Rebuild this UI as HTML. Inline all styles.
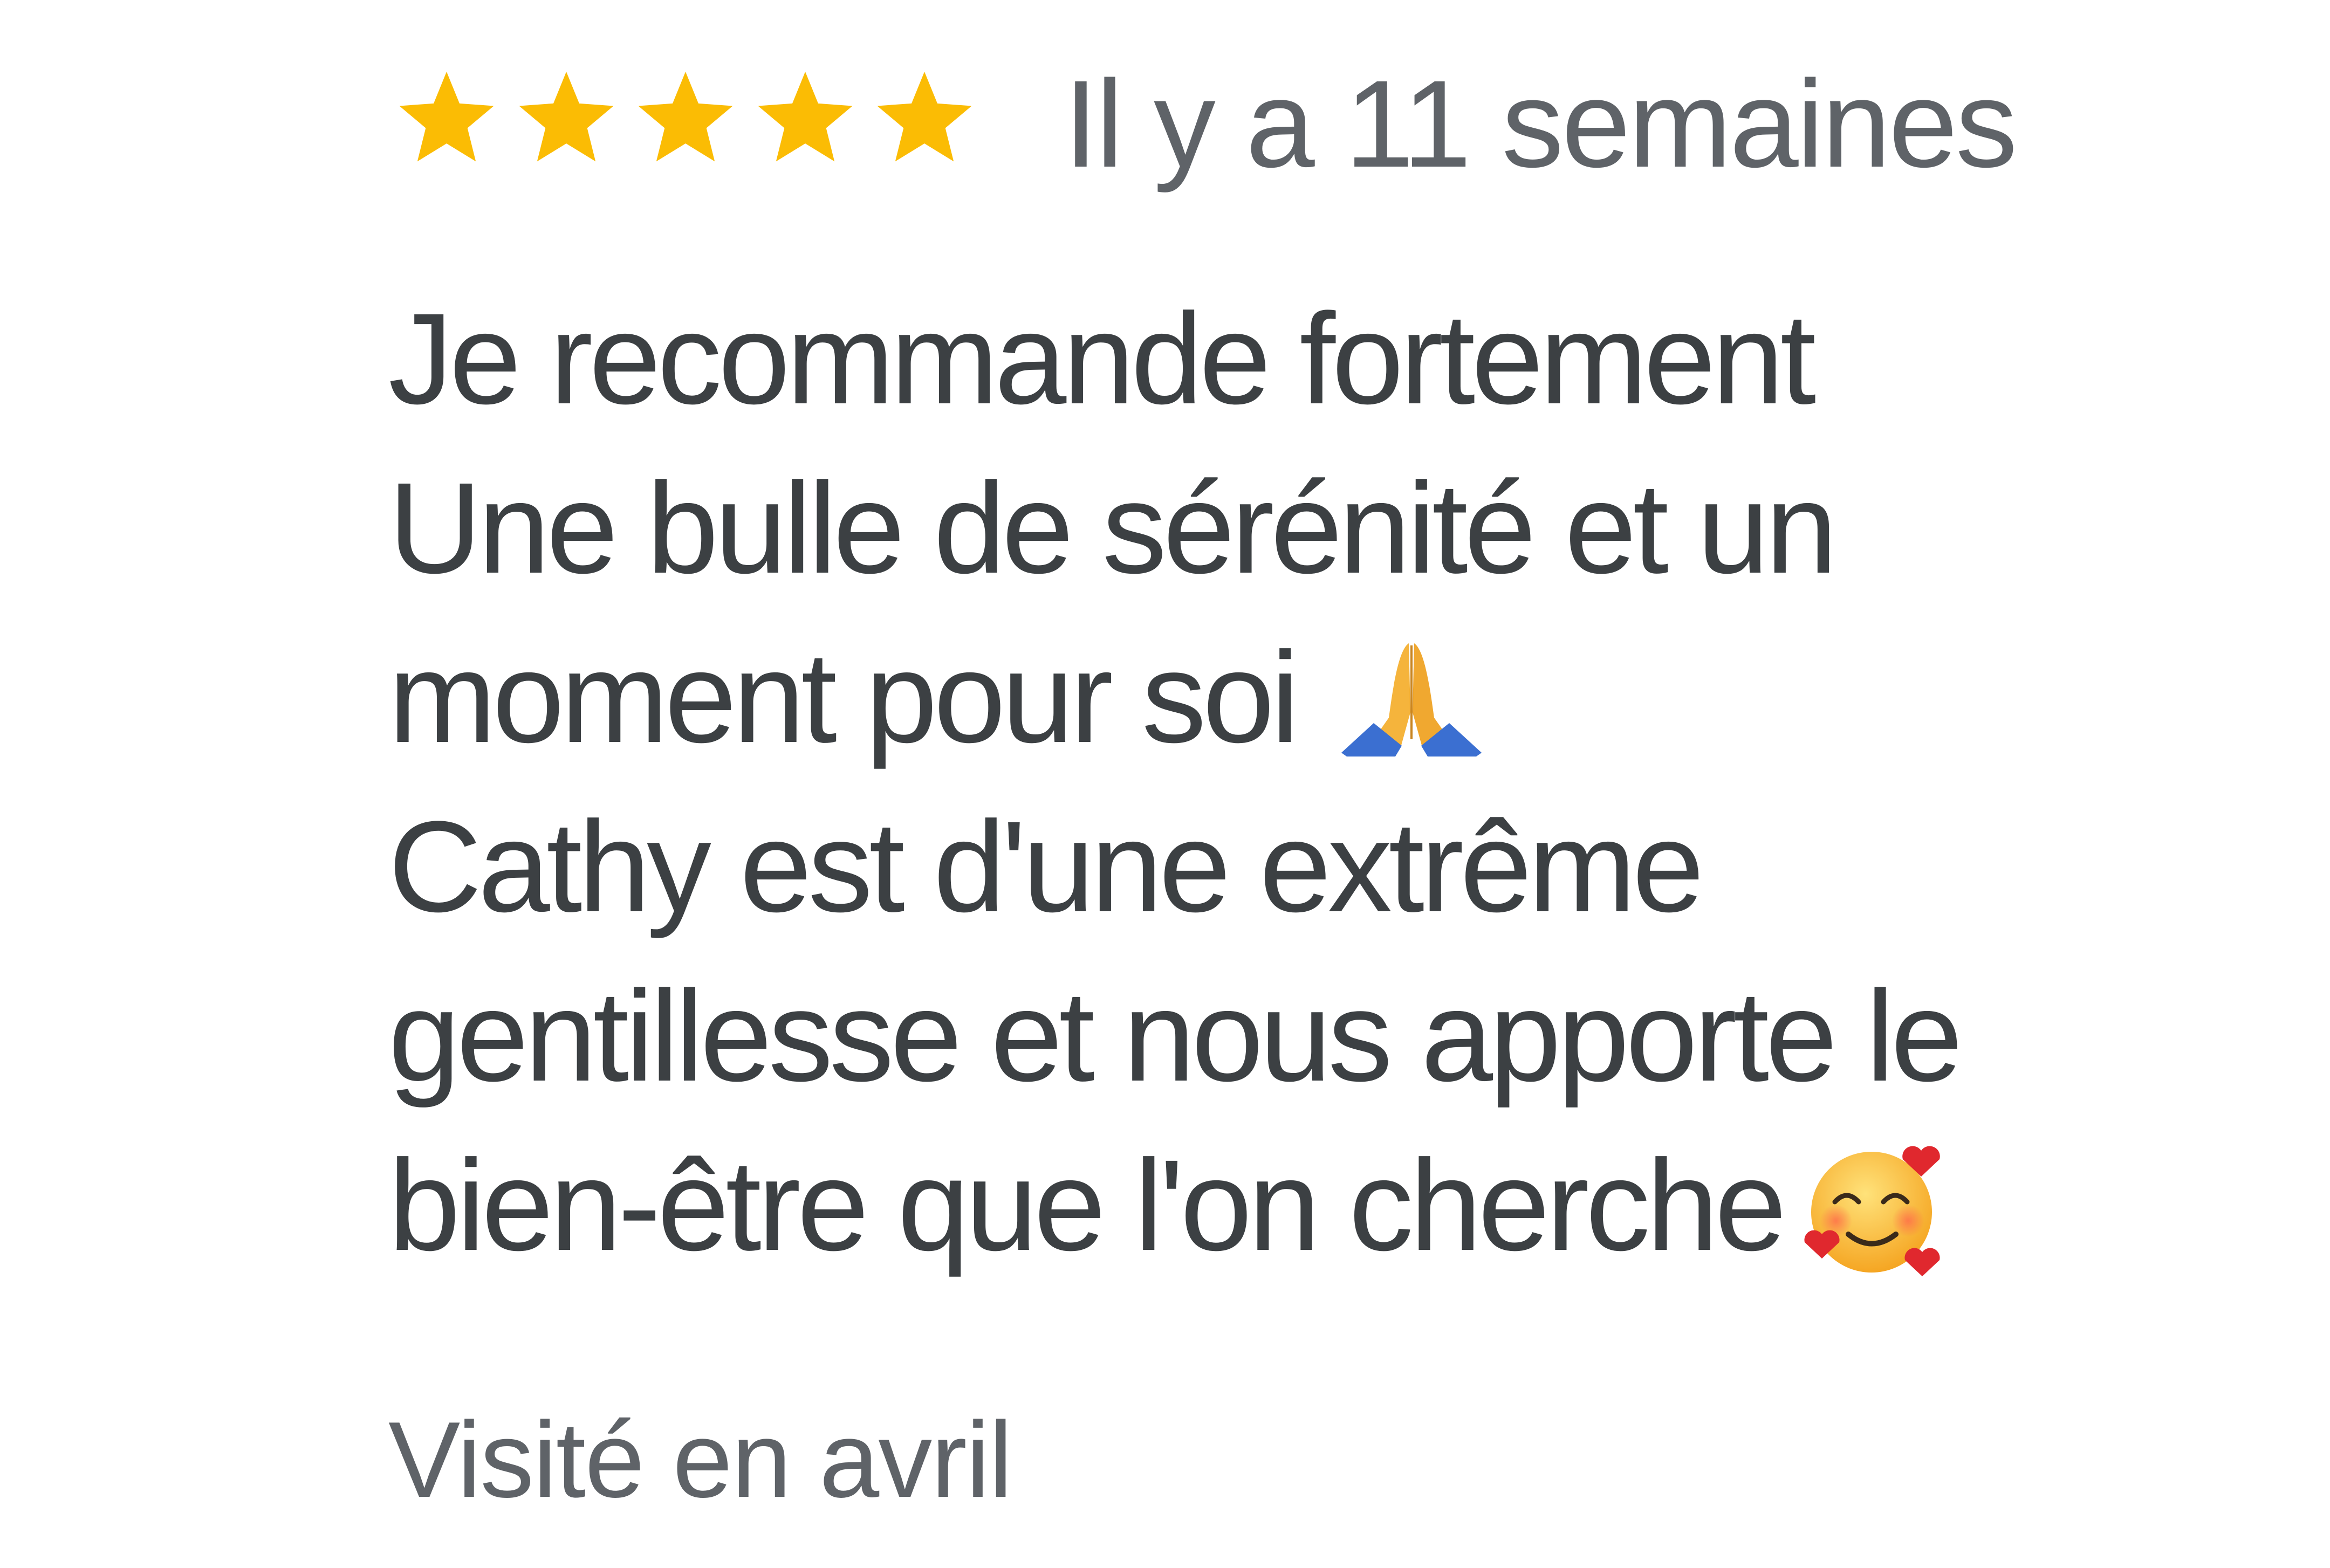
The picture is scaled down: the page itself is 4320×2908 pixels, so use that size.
<!DOCTYPE html>
<html><head><meta charset="utf-8"><style>
html,body{margin:0;padding:0;background:#fff;}
body{width:4320px;height:2908px;position:relative;overflow:hidden;font-family:"Liberation Sans",sans-serif;}
.t{position:absolute;left:720px;white-space:nowrap;}
.hdr{left:1972px;top:80px;font-size:230px;line-height:300px;color:#5f6368;letter-spacing:-4px;}
.body{top:508px;font-size:240px;line-height:314px;color:#3c4043;letter-spacing:-7px;}
.vis{top:2551px;font-size:200px;line-height:314px;color:#5f6368;letter-spacing:-2px;}
.star{position:absolute;top:133px;width:188px;height:178px;}
</style></head><body>
<svg class="star" style="left:734px" viewBox="0 0 24 23"><path d="M12 0l3.1 7.6 8.2.6-6.3 5.3 2 8L12 17.2 5 21.5l2-8L.7 8.2l8.2-.6z" fill="#FBBC04"/></svg>
<svg class="star" style="left:956px" viewBox="0 0 24 23"><path d="M12 0l3.1 7.6 8.2.6-6.3 5.3 2 8L12 17.2 5 21.5l2-8L.7 8.2l8.2-.6z" fill="#FBBC04"/></svg>
<svg class="star" style="left:1177px" viewBox="0 0 24 23"><path d="M12 0l3.1 7.6 8.2.6-6.3 5.3 2 8L12 17.2 5 21.5l2-8L.7 8.2l8.2-.6z" fill="#FBBC04"/></svg>
<svg class="star" style="left:1399px" viewBox="0 0 24 23"><path d="M12 0l3.1 7.6 8.2.6-6.3 5.3 2 8L12 17.2 5 21.5l2-8L.7 8.2l8.2-.6z" fill="#FBBC04"/></svg>
<svg class="star" style="left:1620px" viewBox="0 0 24 23"><path d="M12 0l3.1 7.6 8.2.6-6.3 5.3 2 8L12 17.2 5 21.5l2-8L.7 8.2l8.2-.6z" fill="#FBBC04"/></svg>
<div class="t hdr">Il y a 11 semaines</div>
<div class="t body">Je recommande fortement<br>Une bulle de sérénité et un<br>moment pour soi<br>Cathy est d'une extrême<br>gentillesse et nous apporte le<br>bien-être que l'on cherche</div>
<svg style="position:absolute;left:2487px;top:1191px;width:260px;height:213px" viewBox="0 0 260 213">
<path d="M125 2 C105 15 95 90 88 140 L60 180 L110 195 L128 130 Z" fill="#f5b43c"/>
<path d="M135 2 C155 15 165 90 172 140 L200 180 L150 195 L132 130 Z" fill="#f0a830"/>
<path d="M130 6 L130 180" stroke="#c98520" stroke-width="4"/>
<path d="M0 205 L60 150 L112 192 L100 212 L10 212 Z" fill="#3b6fd1"/>
<path d="M260 205 L200 150 L148 192 L160 212 L250 212 Z" fill="#3b6fd1"/>
</svg>
<svg style="position:absolute;left:3342px;top:2124px;width:258px;height:244px" viewBox="0 0 258 244">
<defs><radialGradient id="g" cx="45%" cy="35%" r="65%"><stop offset="0" stop-color="#ffe27a"/><stop offset="1" stop-color="#f5a623"/></radialGradient>
<radialGradient id="b" r="50%"><stop offset="0" stop-color="#ff6a4a" stop-opacity=".8"/><stop offset="1" stop-color="#ff6a4a" stop-opacity="0"/></radialGradient></defs>
<circle cx="128" cy="124" r="112" fill="url(#g)"/>
<circle cx="62" cy="140" r="30" fill="url(#b)"/><circle cx="196" cy="140" r="30" fill="url(#b)"/>
<path d="M60 105 q22-24 44 0 M150 105 q22-24 44 0" stroke="#3a2a1a" stroke-width="9" fill="none" stroke-linecap="round"/>
<path d="M85 165 q43 35 88 0" stroke="#3a2a1a" stroke-width="10" fill="none" stroke-linecap="round"/>
<path d="M220 58 l-34-32 a19 19 0 0 1 34-16 a19 19 0 0 1 34 16z" fill="#e0282e"/>
<path d="M36 210 l-32-30 a18 18 0 0 1 32-15 a18 18 0 0 1 32 15z" fill="#e0282e"/>
<path d="M222 243 l-32-30 a18 18 0 0 1 32-15 a18 18 0 0 1 32 15z" fill="#e0282e"/>
</svg>
<div class="t vis">Visité en avril</div>
</body></html>
